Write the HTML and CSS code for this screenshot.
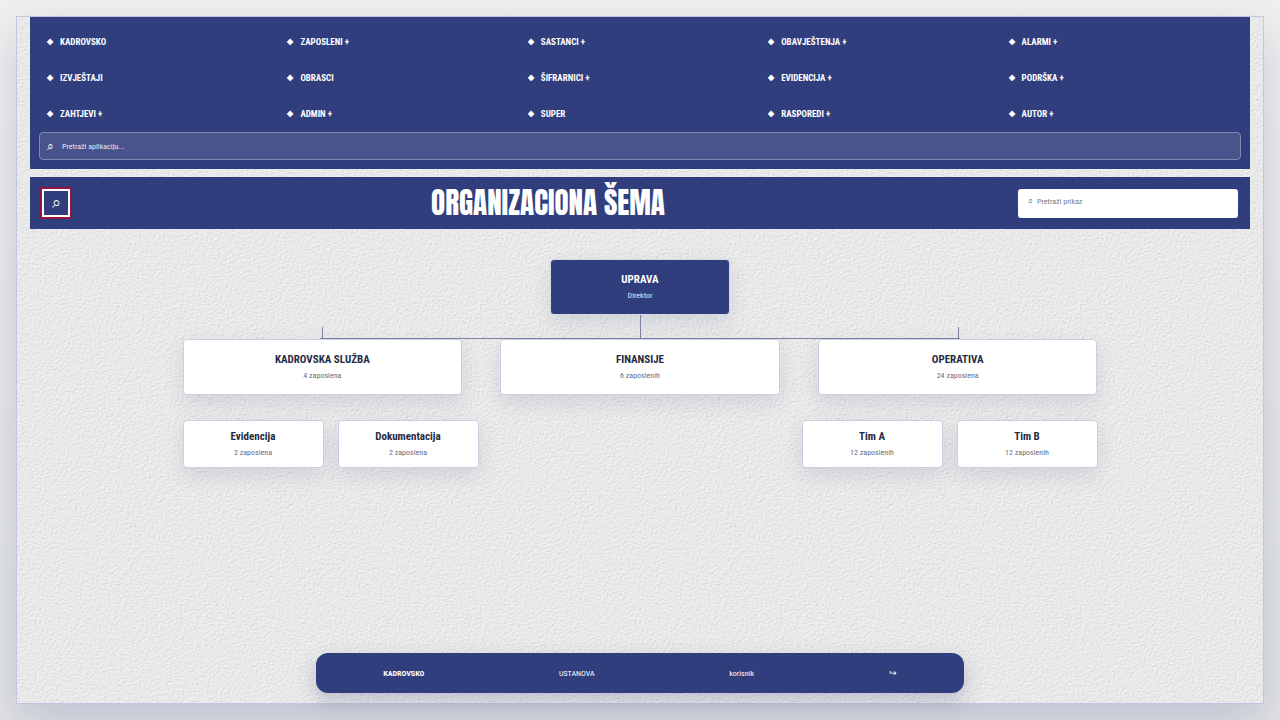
FILE: index.html
```
<!DOCTYPE html>
<html lang="bs">
<head>
    <meta charset="UTF-8">
    <meta name="viewport" content="width=device-width, initial-scale=1.0">
    <title>Organizaciona šema</title>
    <link rel="stylesheet" href="styles.css">
</head>
<body>
    <div class="page">
        <header class="header">
            <nav class="menu">
                <a href="#">KADROVSKO</a>
                <a href="#">ZAPOSLENI +</a>
                <a href="#">SASTANCI +</a>
                <a href="#">OBAVJEŠTENJA +</a>
                <a href="#">ALARMI +</a>
                <a href="#">IZVJEŠTAJI</a>
                <a href="#">OBRASCI</a>
                <a href="#">ŠIFRARNICI +</a>
                <a href="#">EVIDENCIJA +</a>
                <a href="#">PODRŠKA +</a>
                <a href="#">ZAHTJEVI +</a>
                <a href="#">ADMIN +</a>
                <a href="#">SUPER</a>
                <a href="#">RASPOREDI +</a>
                <a href="#">AUTOR +</a>
            </nav>
            <label class="app-search">
                <span class="icon">⌕</span>
                <input type="text" placeholder="Pretraži aplikaciju..." aria-label="Pretraži aplikaciju">
            </label>
        </header>

        <div class="title-bar">
            <button class="search-btn" aria-label="Pretraga">⌕</button>
            <h1>ORGANIZACIONA ŠEMA</h1>
            <label class="view-search">
                <span class="icon">⌕</span>
                <input type="text" placeholder="Pretraži prikaz" aria-label="Pretraži prikaz">
            </label>
        </div>

        <main class="chart">
            <div class="node root">
                <strong>UPRAVA</strong>
                <span>Direktor</span>
            </div>
            <div class="stem"></div>
            <div class="departments">
                <div class="node">
                    <strong>KADROVSKA SLUŽBA</strong>
                    <span>4 zaposlena</span>
                </div>
                <div class="node">
                    <strong>FINANSIJE</strong>
                    <span>6 zaposlenih</span>
                </div>
                <div class="node">
                    <strong>OPERATIVA</strong>
                    <span>24 zaposlena</span>
                </div>
            </div>
            <div class="teams">
                <div class="team-group">
                    <div class="node team">
                        <strong>Evidencija</strong>
                        <span>2 zaposlena</span>
                    </div>
                    <div class="node team">
                        <strong>Dokumentacija</strong>
                        <span>2 zaposlena</span>
                    </div>
                </div>
                <div class="team-group">
                    <div class="node team">
                        <strong>Tim A</strong>
                        <span>12 zaposlenih</span>
                    </div>
                    <div class="node team">
                        <strong>Tim B</strong>
                        <span>12 zaposlenih</span>
                    </div>
                </div>
            </div>
        </main>

        <footer class="footer">
            <strong>KADROVSKO</strong>
            <span>USTANOVA</span>
            <span>korisnik</span>
            <a href="#" aria-label="Odjava">↪</a>
        </footer>
    </div>
</body>
</html>
```
FILE: styles.css
```
* {
    margin: 0;
    padding: 0;
    box-sizing: border-box;
}
body {
    min-height: 100vh;
    padding: 16px;
    display: flex;
    background: linear-gradient(180deg, #f0f0ee, #e2e3e5);
    font-family: "Roboto Condensed", "Liberation Sans", sans-serif;
    font-size: 9px;
    color: #252b42;
}
a {
    color: inherit;
    text-decoration: none;
}
input {
    flex: 1;
    min-width: 0;
    border: none;
    outline: none;
    background: transparent;
    font: inherit;
    font-size: 8px;
    color: inherit;
}
.page {
    flex: 1;
    display: flex;
    flex-direction: column;
    padding: 0 13px 10px;
    border: 1px solid #c3c6dc;
    background-color: #e8e8e8;
    /* embossed paper texture */
    background-image: url("data:image/svg+xml,%3Csvg xmlns='http://www.w3.org/2000/svg' width='300' height='300'%3E%3Cfilter id='p' x='0' y='0' width='100%25' height='100%25'%3E%3CfeTurbulence type='fractalNoise' baseFrequency='.42 .6' numOctaves='3' seed='4' stitchTiles='stitch'/%3E%3CfeDiffuseLighting surfaceScale='.6' diffuseConstant='1.08' lighting-color='%23f0f0f0'%3E%3CfeDistantLight azimuth='235' elevation='60'/%3E%3C/feDiffuseLighting%3E%3C/filter%3E%3Crect width='300' height='300' filter='url(%23p)'/%3E%3C/svg%3E");
    box-shadow: 0 18px 45px rgba(47, 61, 125, 0.2);
}
.header {
    padding: 7px 9px 9px;
    background: #303e7d;
    color: white;
}
.menu {
    display: grid;
    grid-template-columns: repeat(5, 1fr);
}
.menu a {
    display: flex;
    align-items: center;
    height: 36px;
    padding: 0 8px;
    gap: 6px;
    font-weight: bold;
}
.menu a::before {
    content: "◆";
    width: 7px;
    font-size: 8px;
    line-height: 10px;
}
.app-search {
    display: flex;
    align-items: center;
    gap: 8px;
    height: 28px;
    padding: 0 7px;
    border: 1px solid #8189b3;
    border-radius: 4px;
    background: #49538c;
}
.app-search .icon {
    font-size: 12px;
}
.app-search input::placeholder {
    color: #e6e8f2;
}
.title-bar {
    display: flex;
    align-items: center;
    margin-top: 8px;
    height: 52px;
    padding: 0 12px;
    background: #303e7d;
    color: white;
}
.search-btn {
    width: 28px;
    height: 28px;
    border: 2px solid white;
    outline: 2px solid #93143b;
    background: transparent;
    color: white;
    font-size: 16px;
    line-height: 24px;
}
.title-bar h1 {
    flex: 1;
    padding-left: 8px;
    text-align: center;
    font-family: Impact, Anton, "Roboto Condensed", sans-serif;
    font-size: 29px;
    font-weight: normal;
    line-height: 36px;
}
.view-search {
    display: flex;
    align-items: center;
    gap: 4px;
    width: 220px;
    height: 29px;
    padding: 0 10px 4px;
    border-radius: 3px;
    background: white;
    color: #73798c;
}
.view-search input::placeholder {
    color: #73798c;
}
.chart {
    width: 75%;
    margin: 30px auto 0;
}
.node {
    display: flex;
    flex-direction: column;
    justify-content: center;
    align-items: center;
    gap: 3px;
    height: 56px;
    border: 1px solid #cccfdf;
    border-radius: 4px;
    background: white;
    box-shadow: 0 8px 20px rgba(47, 61, 125, 0.13);
}
.node strong {
    font-size: 11px;
    line-height: 14px;
}
.node span {
    font-size: 8px;
    line-height: 12px;
    color: #656b80;
}
.root {
    width: 180px;
    margin: 0 auto;
    border-color: #d7d9e4;
    background: #303e7d;
    color: white;
}
.root span {
    color: #e6e8f2;
}
.stem {
    width: 1px;
    height: 24px;
    margin: 0 auto;
    background: #7c82a1;
}
.departments {
    display: grid;
    grid-template-columns: repeat(3, 1fr);
    gap: 38px;
    position: relative;
}
/* connecting line and its two end ticks */
.departments::before {
    content: "";
    position: absolute;
    top: -1px;
    left: 15%;
    right: 15%;
    height: 1px;
    background: #7c82a1;
}
.departments::after {
    content: "";
    position: absolute;
    top: -12px;
    left: 139px;
    right: 139px;
    height: 12px;
    border: solid #7c82a1;
    border-width: 0 1px;
}
.teams {
    display: flex;
    justify-content: space-between;
    margin-top: 25px;
}
.team-group {
    display: flex;
    gap: 14px;
}
.team {
    width: 141px;
    height: 48px;
}
.footer {
    display: flex;
    justify-content: space-around;
    align-items: center;
    width: 648px;
    max-width: 100%;
    height: 40px;
    margin: auto auto 0;
    border-radius: 12px;
    background: #303e7d;
    color: white;
    font-size: 8px;
    box-shadow: 0 8px 20px rgba(47, 61, 125, 0.25);
}
.footer a {
    font-size: 9px;
}
```
